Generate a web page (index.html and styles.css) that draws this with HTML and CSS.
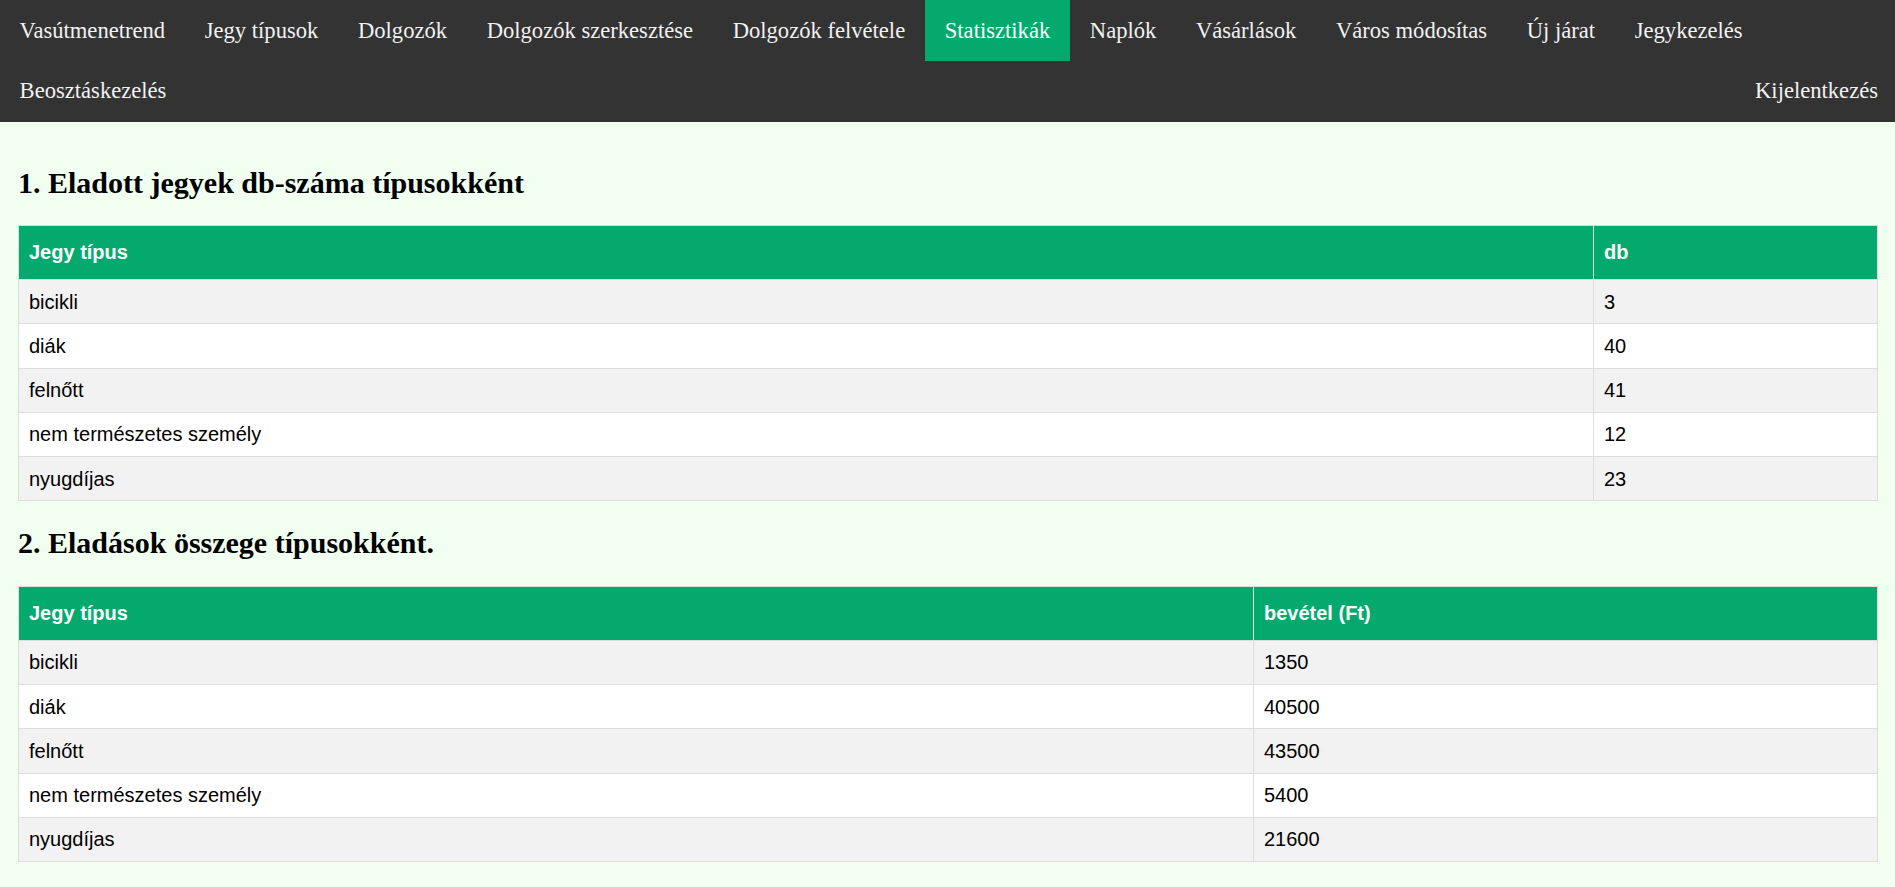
FILE: index.html
```html
<!DOCTYPE html>
<html lang="hu">
<head>
<meta charset="utf-8">
<title>Statisztikák</title>
<link rel="stylesheet" href="styles.css">
</head>
<body>
<nav class="topnav">
  <a href="#">Vasútmenetrend</a>
  <a href="#">Jegy típusok</a>
  <a href="#">Dolgozók</a>
  <a href="#">Dolgozók szerkesztése</a>
  <a href="#">Dolgozók felvétele</a>
  <a href="#" class="active">Statisztikák</a>
  <a href="#">Naplók</a>
  <a href="#">Vásárlások</a>
  <a href="#">Város módosítas</a>
  <a href="#">Új járat</a>
  <a href="#">Jegykezelés</a>
  <a href="#">Beosztáskezelés</a>
  <a href="#" class="logout">Kijelentkezés</a>
</nav>
<main class="content">
  <h2 class="title">1. Eladott jegyek db-száma típusokként</h2>
  <table class="stats">
    <colgroup><col><col class="col-db"></colgroup>
    <tr><th>Jegy típus</th><th>db</th></tr>
    <tr><td>bicikli</td><td>3</td></tr>
    <tr><td>diák</td><td>40</td></tr>
    <tr><td>felnőtt</td><td>41</td></tr>
    <tr><td>nem természetes személy</td><td>12</td></tr>
    <tr><td>nyugdíjas</td><td>23</td></tr>
  </table>
  <h2 class="title">2. Eladások összege típusokként.</h2>
  <table class="stats">
    <colgroup><col><col class="col-ft"></colgroup>
    <tr><th>Jegy típus</th><th>bevétel (Ft)</th></tr>
    <tr><td>bicikli</td><td>1350</td></tr>
    <tr><td>diák</td><td>40500</td></tr>
    <tr><td>felnőtt</td><td>43500</td></tr>
    <tr><td>nem természetes személy</td><td>5400</td></tr>
    <tr><td>nyugdíjas</td><td>21600</td></tr>
  </table>
</main>
</body>
</html>
```

FILE: styles.css
```css
html, body {
  margin: 0;
  padding: 0;
}
body {
  background: #f0fff0;
  color: #000;
  font-family: "Liberation Serif", "Times New Roman", serif;
}
.topnav {
  background: #333;
  display: flex;
  flex-wrap: wrap;
}
.topnav a {
  display: block;
  color: #f2f2f2;
  text-decoration: none;
  font-size: 22.6px;
  line-height: 25.6px;
  padding: 17.6px 20px 17.6px 19.6px;
}
.topnav a.active {
  background: #04aa6d;
  color: #fff;
}
.topnav a.logout {
  margin-left: auto;
  padding-right: 17px;
}
.content {
  padding: 19px 17px 0 18px;
}
.title {
  font-size: 30px;
  font-weight: bold;
  line-height: 34.5px;
  margin: 25px 0;
}
.stats {
  width: 100%;
  border-collapse: collapse;
  table-layout: fixed;
  font-family: "Liberation Sans", Arial, Helvetica, sans-serif;
  font-size: 20px;
}
.col-db { width: 284px; }
.col-ft { width: 624px; }
.stats th,
.stats td {
  border: 1px solid #ddd;
  padding: 10.5px 10px 9.5px;
  line-height: 23.2px;
  text-align: left;
}
.stats th {
  padding-top: 15px;
  padding-bottom: 15px;
  background: #04aa6d;
  color: #fff;
  font-weight: bold;
}
.stats tr {
  background: #fff;
}
.stats tr:nth-child(even) {
  background: #f2f2f2;
}
```
